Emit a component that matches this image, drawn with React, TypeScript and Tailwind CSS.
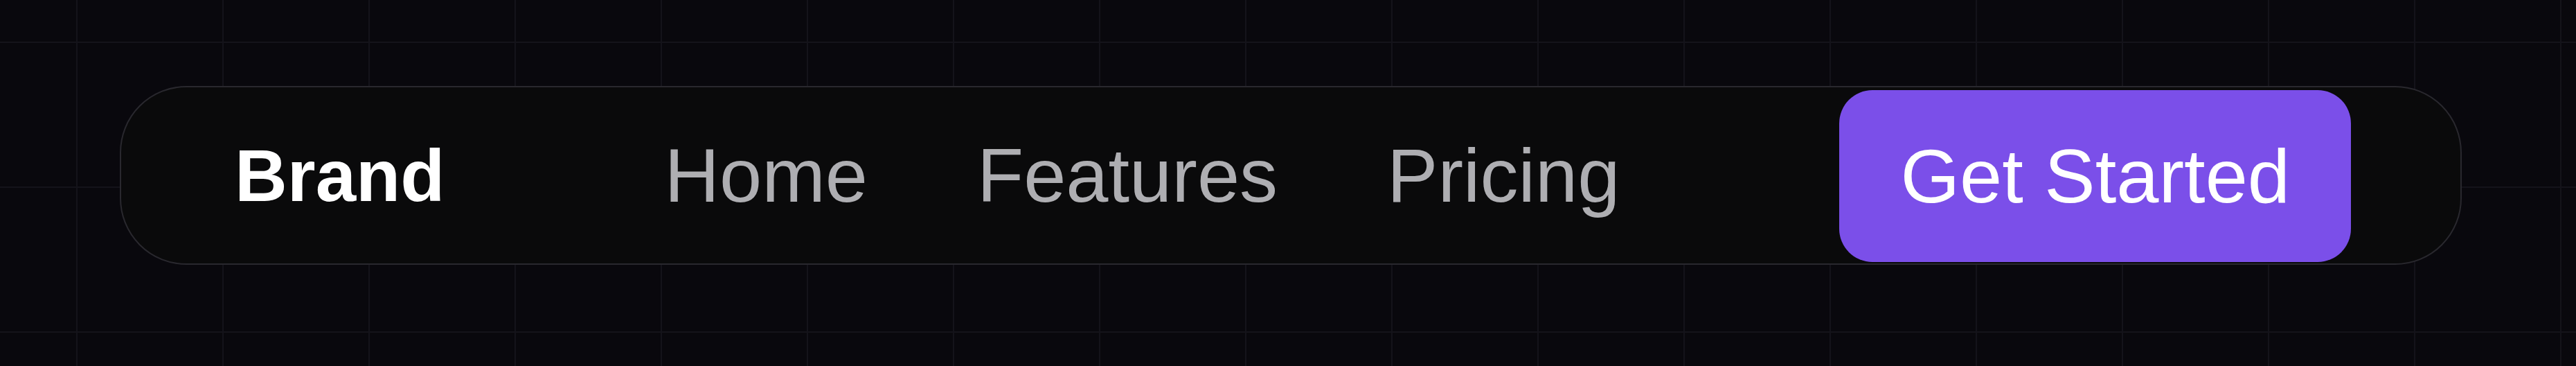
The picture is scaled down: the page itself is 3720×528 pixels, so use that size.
export default function App() {
  const links = ["Home", "Features", "Pricing"];
  return (
    <div
      className="min-h-[528px] w-full bg-[#09080d] bg-[linear-gradient(to_right,#14131a_2px,transparent_2px),linear-gradient(to_bottom,#14131a_2px,transparent_2px)] bg-[size:211px_209px] bg-[position:110px_60px] pt-[124px] pl-[173px] pr-[165px]"
      style={{ fontFamily: '"Liberation Sans", Arial, sans-serif' }}
    >
      <nav className="flex h-[258px] items-center justify-between rounded-[96px] border-2 border-[#29282e] bg-[#0a0a0b] pl-[164px] pr-[158px]">
        <a className="text-[105px] font-bold leading-none text-white">Brand</a>
        <ul className="flex items-center gap-[158px]">
          {links.map((l) => (
            <li key={l}>
              <a className="text-[110px] leading-none text-[#aeaeb2]">{l}</a>
            </li>
          ))}
        </ul>
        <button className="mt-[2px] flex h-[248px] items-center rounded-[48px] bg-[#7b4fe9] px-[88px] text-[110px] leading-none text-white">
          Get Started
        </button>
      </nav>
    </div>
  );
}
